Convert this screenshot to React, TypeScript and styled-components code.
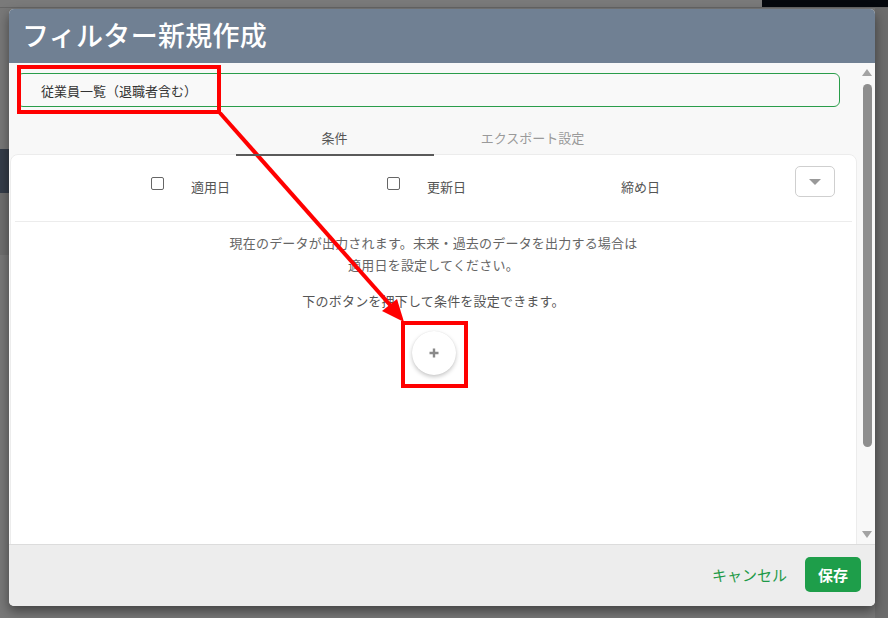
import React from "react";
import styled, { createGlobalStyle } from "styled-components";

const GlobalStyle = createGlobalStyle`
  html, body { margin: 0; padding: 0; }
  body {
    background: #777777;
    font-family: "Noto Sans CJK JP", "Noto Sans", sans-serif;
  }
  * { box-sizing: border-box; }
`;

const Page = styled.div`
  position: relative;
  width: 888px;
  height: 618px;
  overflow: hidden;
  background: #787878;
  display: flex;
  flex-direction: column;
`;

const TopStrip = styled.div`
  height: 8px;
  flex: none;
  display: flex;
  border-bottom: 1px solid #666;
`;

const TopGray = styled.div`
  flex: 1;
  background: #7a7a7a;
`;

const TopDark = styled.div`
  width: 126px;
  background: #05080d;
`;

const BackRow = styled.div`
  flex: 1;
  display: flex;
`;

const BackMain = styled.div`
  flex: 1;
  display: flex;
  flex-direction: column;
`;

const BackGutter = styled.div`
  width: 13px;
  background: #6c6c6c;
`;

const Spacer = styled.div<{ $h: number }>`
  height: ${(p) => p.$h}px;
`;

const NavBand = styled.div`
  height: 44px;
  width: 300px;
  background: #353d49;
`;

const MidBand = styled.div`
  height: 62px;
  width: 300px;
  background: #6f6f6f;
`;

const Dialog = styled.div`
  position: absolute;
  left: 9px;
  top: 9px;
  width: 866px;
  height: 597px;
  border-radius: 5px;
  overflow: hidden;
  display: flex;
  flex-direction: column;
  background: #f8f8f8;
  box-shadow: 0 5px 12px rgba(0, 0, 0, 0.45);
`;

const Header = styled.div`
  height: 54px;
  flex: none;
  background: #708093;
  display: flex;
  align-items: center;
  padding-left: 13px;
`;

const Title = styled.h1`
  margin: 0;
  margin-top: -3px;
  font-size: 27px;
  font-weight: 500;
  color: #ffffff;
  letter-spacing: 0.3px;
`;

const Body = styled.div`
  flex: 1;
  display: flex;
  min-height: 0;
`;

const ScrollContent = styled.div`
  flex: 1;
  display: flex;
  flex-direction: column;
  overflow: hidden;
  min-width: 0;
`;

const NameInput = styled.div`
  margin: 10px 18px 0 8px;
  height: 34px;
  border: 1px solid #2a9d4a;
  border-radius: 6px;
  background: #f9f9f9;
  display: flex;
  align-items: center;
  padding-left: 23px;
  font-size: 13px;
  color: #333;
  flex: none;
`;

const Tabs = styled.div`
  display: flex;
  justify-content: center;
  margin-top: 13px;
  position: relative;
  z-index: 1;
  flex: none;
`;

const Tab = styled.div<{ $active?: boolean }>`
  width: 198px;
  height: 36px;
  display: flex;
  align-items: center;
  justify-content: center;
  padding-bottom: 0;
  font-size: 13px;
  color: ${(p) => (p.$active ? "#555" : "#9a9a9a")};
  border-bottom: 2px solid ${(p) => (p.$active ? "#5a5a5a" : "transparent")};
`;

const Card = styled.div`
  flex: 1;
  margin: -2px 1px -10px 1px;
  background: #ffffff;
  border: 1px solid #ececec;
  border-radius: 8px;
  display: flex;
  flex-direction: column;
  align-items: stretch;
`;

const CardHeader = styled.div`
  height: 66px;
  display: flex;
  align-items: center;
  padding: 0 21px 0 140px;
`;

const HeaderItem = styled.div<{ $w?: number }>`
  width: ${(p) => (p.$w ? `${p.$w}px` : "auto")};
  display: flex;
  align-items: center;
  font-size: 13px;
  color: #555;
`;

const Check = styled.span`
  width: 13px;
  height: 13px;
  border: 1px solid #666;
  border-radius: 2px;
  background: #fff;
  margin-right: 27px;
  margin-top: -9px;
`;

const Label = styled.span`
  margin-top: -4px;
`;

const DropButton = styled.div`
  margin-left: auto;
  width: 40px;
  height: 31px;
  margin-top: -14px;
  border: 1px solid #cfcfcf;
  border-radius: 5px;
  background: #fff;
  display: flex;
  align-items: center;
  justify-content: center;
`;

const Caret = styled.span`
  width: 0;
  height: 0;
  border-left: 6px solid transparent;
  border-right: 6px solid transparent;
  border-top: 6px solid #999;
  margin-top: 1px;
`;

const Divider = styled.div`
  height: 1px;
  background: #ececec;
  margin: 0 4px;
`;

const CardBody = styled.div`
  display: flex;
  flex-direction: column;
  align-items: center;
  padding-top: 10px;
`;

const Note = styled.p`
  margin: 0;
  font-size: 13px;
  line-height: 22px;
  letter-spacing: 0.2px;
  color: #666;
  text-align: center;
`;

const Hint = styled(Note)`
  margin-top: 14px;
  color: #555;
`;

const AddButton = styled.div`
  margin-top: 19px;
  width: 44px;
  height: 44px;
  border-radius: 50%;
  background: #fff;
  box-shadow: 0 2px 4px rgba(0, 0, 0, 0.22), 0 0 1px rgba(0, 0, 0, 0.1);
  display: flex;
  align-items: center;
  justify-content: center;
`;

const Scrollbar = styled.div`
  width: 17px;
  flex: none;
  background: #f8f8f8;
  display: flex;
  flex-direction: column;
  align-items: center;
  padding: 6px 0 6px 1px;
`;

const ArrowUp = styled.span`
  width: 0;
  height: 0;
  border-left: 5px solid transparent;
  border-right: 5px solid transparent;
  border-bottom: 7px solid #a3a3a3;
`;

const ArrowDown = styled.span`
  margin-top: auto;
  width: 0;
  height: 0;
  border-left: 5px solid transparent;
  border-right: 5px solid transparent;
  border-top: 7px solid #a3a3a3;
`;

const Thumb = styled.div`
  margin-top: 8px;
  width: 9px;
  height: 363px;
  border-radius: 5px;
  background: #8e8e8e;
`;

const Footer = styled.div`
  height: 62px;
  flex: none;
  background: #ededed;
  border-top: 1px solid #dcdcdc;
  display: flex;
  align-items: center;
  justify-content: flex-end;
  padding-right: 14px;
`;

const CancelButton = styled.span`
  font-size: 15px;
  color: #1f9a48;
  margin-right: 18px;
  margin-top: -2px;
`;

const SaveButton = styled.div`
  width: 56px;
  height: 35px;
  border-radius: 5px;
  background: #1e9e4a;
  color: #fff;
  font-size: 15px;
  font-weight: 700;
  display: flex;
  align-items: center;
  justify-content: center;
  margin-top: -2px;
`;

const Annotation = styled.svg`
  position: absolute;
  left: 0;
  top: 0;
  pointer-events: none;
`;

export default function App() {
  return (
    <>
      <GlobalStyle />
      <Page>
        <TopStrip>
          <TopGray />
          <TopDark />
        </TopStrip>
        <BackRow>
          <BackMain>
            <Spacer $h={141} />
            <NavBand />
            <MidBand />
          </BackMain>
          <BackGutter />
        </BackRow>

        <Dialog>
          <Header>
            <Title>フィルター新規作成</Title>
          </Header>
          <Body>
            <ScrollContent>
              <NameInput>従業員一覧（退職者含む）</NameInput>
              <Tabs>
                <Tab $active>条件</Tab>
                <Tab>エクスポート設定</Tab>
              </Tabs>
              <Card>
                <CardHeader>
                  <HeaderItem $w={236}>
                    <Check />
                    <Label>適用日</Label>
                  </HeaderItem>
                  <HeaderItem $w={234}>
                    <Check />
                    <Label>更新日</Label>
                  </HeaderItem>
                  <HeaderItem>
                    <Label>締め日</Label>
                  </HeaderItem>
                  <DropButton>
                    <Caret />
                  </DropButton>
                </CardHeader>
                <Divider />
                <CardBody>
                  <Note>
                    現在のデータが出力されます。未来・過去のデータを出力する場合は
                    <br />
                    適用日を設定してください。
                  </Note>
                  <Hint>下のボタンを押下して条件を設定できます。</Hint>
                  <AddButton>
                    <svg width="10" height="10" viewBox="0 0 10 10">
                      <path d="M5 0.5V9.5M0.5 5H9.5" stroke="#8a8a8a" strokeWidth="2.4" />
                    </svg>
                  </AddButton>
                </CardBody>
              </Card>
            </ScrollContent>
            <Scrollbar>
              <ArrowUp />
              <Thumb />
              <ArrowDown />
            </Scrollbar>
          </Body>
          <Footer>
            <CancelButton>キャンセル</CancelButton>
            <SaveButton>保存</SaveButton>
          </Footer>
        </Dialog>

        <Annotation width="888" height="618" viewBox="0 0 888 618">
          <rect x="19" y="67" width="200" height="45" fill="none" stroke="#ff0000" strokeWidth="4" />
          <rect x="403" y="323" width="63" height="63" fill="none" stroke="#ff0000" strokeWidth="4" />
          <line x1="220" y1="113" x2="391" y2="306" stroke="#ff0000" strokeWidth="4" />
          <polygon points="404,322 397,299 382,311" fill="#ff0000" />
        </Annotation>
      </Page>
    </>
  );
}
